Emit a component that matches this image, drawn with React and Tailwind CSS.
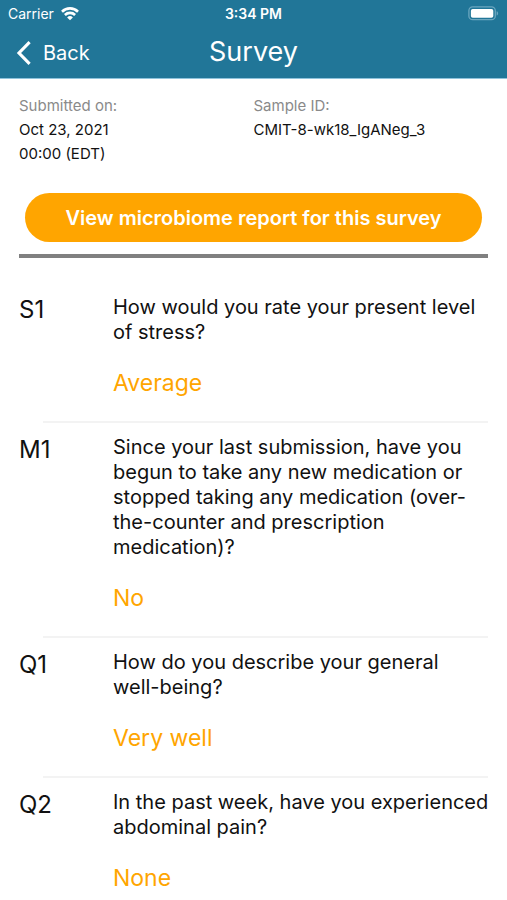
const answers = [
    { id: 'S1', question: 'How would you rate your present level of stress?', answer: 'Average' },
    {
        id: 'M1',
        question:
            'Since your last submission, have you begun to take any new medication or stopped taking any medication (over-the-counter and prescription medication)?',
        answer: 'No',
    },
    {
        id: 'Q1',
        question: (
            <>
                How do you describe your general <span className="whitespace-nowrap">well-being?</span>
            </>
        ),
        answer: 'Very well',
    },
    { id: 'Q2', question: 'In the past week, have you experienced abdominal pain?', answer: 'None' },
];

function WifiIcon() {
    return (
        <svg viewBox="0 0 18 14" className="h-[14px] w-[18px]" fill="none" stroke="currentColor" strokeWidth="2.6" aria-hidden="true">
            <path d="M1 4.7a11.4 11.4 0 0 1 16 0" />
            <path d="M3.9 8a7.3 7.3 0 0 1 10.2 0" />
            <path d="M9 13.2 6.1 10.4a4.2 4.2 0 0 1 5.8 0z" fill="currentColor" stroke="none" />
        </svg>
    );
}

function BatteryIcon() {
    return (
        <svg viewBox="0 0 31 15" className="h-[15px] w-[31px]" aria-hidden="true">
            <rect x="0.9" y="0.9" width="26.4" height="12.800" rx="3.8" fill="none" stroke="#6ba6bf" strokeWidth="1.3" />
            <rect x="2.9" y="2.900" width="22.400" height="8.800" rx="1.8" fill="#fff" />
            <path d="M28.6 5.2c2 .6 2 3.700 0 4.300z" fill="#6ba6bf" />
        </svg>
    );
}

function StatusBar() {
    return (
        <div className="grid h-[27px] grid-cols-3 items-center px-2 text-sm">
            <div className="flex items-center gap-[7px]">
                <span>Carrier</span>
                <WifiIcon />
            </div>
            <span className="text-center font-semibold">3:34 PM</span>
            <div className="flex justify-end">
                <BatteryIcon />
            </div>
        </div>
    );
}

function NavBar() {
    return (
        <div className="grid h-[51px] grid-cols-3 items-center px-4">
            <button type="button" className="flex items-center gap-3 text-xl">
                <svg viewBox="0 0 15 24" className="h-6 w-[15px]" fill="none" stroke="currentColor" strokeWidth="3.1" aria-hidden="true">
                    <path d="M13.600 1.200 3 12 13.600 22.800" />
                </svg>
                Back
            </button>
            <h1 className="text-center text-[27px]">Survey</h1>
        </div>
    );
}

function SurveyItem({ id, question, answer }) {
    return (
        <li className="group flex flex-col">
            <div className="mr-[19px] ml-6 h-[2px] bg-[#f3f3f3] group-first:bg-transparent" />
            <div className="grid grid-cols-[94px_1fr] pt-3 pr-4 pb-6">
                <div className="text-2xl leading-[30px]">{id}</div>
                <div>
                    <p className="text-xl leading-[25px]">{question}</p>
                    <p className="mt-6 text-[23px] leading-7 text-[#ffa500]">{answer}</p>
                </div>
            </div>
        </li>
    );
}

export default function App() {
    return (
        <div className="min-h-screen bg-white font-['Inter',sans-serif] text-[#111]">
            <header className="border-b border-[#8fc3dc] bg-[#217698] text-white">
                <StatusBar />
                <NavBar />
            </header>

            <main>
                <section className="px-[19px] pt-[15px]">
                    <dl className="grid grid-cols-2 text-[15px] leading-6">
                        <div>
                            <dt className="text-[#8a8a8a]">Submitted on:</dt>
                            <dd>Oct 23, 2021</dd>
                            <dd>00:00 (EDT)</dd>
                        </div>
                        <div>
                            <dt className="text-[#8a8a8a]">Sample ID:</dt>
                            <dd>CMIT-8-wk18_IgANeg_3</dd>
                        </div>
                    </dl>

                    <div className="border-b-4 border-[#808080] px-[6px] pt-[27px] pb-3">
                        <button
                            type="button"
                            className="h-[49px] w-full rounded-full bg-[#ffa500] text-xl font-semibold text-white"
                        >
                            View microbiome report for this survey
                        </button>
                    </div>
                </section>

                <ul className="pt-[23px] pl-[19px]">
                    {answers.map((item) => (
                        <SurveyItem key={item.id} {...item} />
                    ))}
                </ul>
            </main>
        </div>
    );
}
